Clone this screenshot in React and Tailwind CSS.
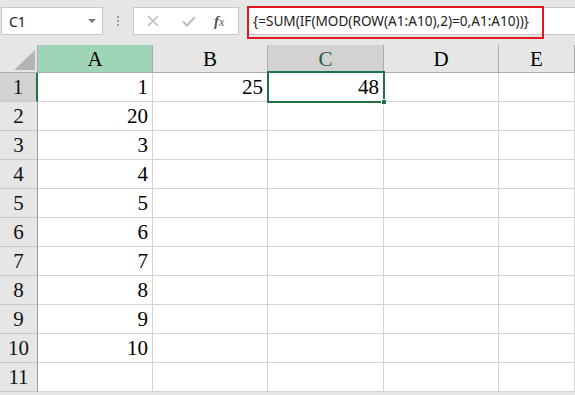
import React from "react";

const cols = [
  { label: "A", w: "w-[115px]" },
  { label: "B", w: "w-[115px]" },
  { label: "C", w: "w-[116px]" },
  { label: "D", w: "w-[115px]" },
  { label: "E", w: "flex-1" },
];

const data = {
  1: { A: "1", B: "25", C: "48" },
  2: { A: "20" },
  3: { A: "3" },
  4: { A: "4" },
  5: { A: "5" },
  6: { A: "6" },
  7: { A: "7" },
  8: { A: "8" },
  9: { A: "9" },
  10: { A: "10" },
};

const serif = "font-['Liberation_Serif','DejaVu_Serif',serif]";

export default function App() {
  const rows = Array.from({ length: 11 }, (_, i) => i + 1);
  return (
    <div className="relative w-[575px] h-[395px] overflow-hidden bg-[#e6e6e6] font-['Noto_Sans','Liberation_Sans',sans-serif]">
      {/* Toolbar */}
      <div className="flex h-[45px] items-start pt-[7px]">
        <div className="ml-[1px] flex h-[28px] w-[102px] items-center justify-between border border-[#c6c6c6] bg-white pl-[7px] pr-[5px]">
          <span className="text-[14px] text-[#222]">C1</span>
          <svg width="10" height="6" viewBox="0 0 10 6">
            <path d="M1 1 L9 1 L5 5 Z" fill="#777" />
          </svg>
        </div>
        <div className="ml-[14px] mt-[9px] flex w-[3px] flex-col gap-[2px]">
          <span className="h-[2px] w-[2px] bg-[#9a9a9a]" />
          <span className="h-[2px] w-[2px] bg-[#9a9a9a]" />
          <span className="h-[2px] w-[2px] bg-[#9a9a9a]" />
        </div>
        <div className="ml-[13px] flex h-[28px] w-[106px] items-center border border-[#c6c6c6] bg-white">
          <svg className="ml-[13px]" width="12" height="12" viewBox="0 0 12 12">
            <path d="M1 1 L11 11 M11 1 L1 11" stroke="#bdbdbd" strokeWidth="1.6" fill="none" />
          </svg>
          <svg className="ml-[23px]" width="14" height="11" viewBox="0 0 14 11">
            <path d="M1 5.5 L5 9.5 L13 1" stroke="#bdbdbd" strokeWidth="2" fill="none" />
          </svg>
          <span className={`ml-[18px] text-[15px] italic text-[#555] ${serif}`}>
            <span className="font-semibold">f</span>
            <span className="text-[12px]">x</span>
          </span>
        </div>
        <div className="ml-[8px] flex h-[28px] flex-1 items-center border border-r-0 border-[#c6c6c6] bg-white pl-[5px]">
          <span className="text-[13.6px] text-[#222]">
            {"{=SUM(IF(MOD(ROW(A1:A10),2)=0,A1:A10))}"}
          </span>
        </div>
      </div>

      {/* Red annotation */}
      <div className="absolute left-[247px] top-[6px] h-[33px] w-[297px] border-2 border-[#e3151f]" />

      {/* Column headers */}
      <div className="flex h-[28px]">
        <div className="relative w-[38px] border-b border-r border-[#ababab] bg-[#e6e6e6]">
          <svg className="absolute left-[14px] top-[5px]" width="21" height="20" viewBox="0 0 21 20">
            <path d="M21 0 L21 20 L0 20 Z" fill="#b4b4b4" />
          </svg>
        </div>
        {cols.map((c) => {
          const bg =
            c.label === "A"
              ? "bg-[#9fd5b7]"
              : c.label === "C"
              ? "bg-[#d2d2d2]"
              : "bg-[#e6e6e6]";
          return (
            <div
              key={c.label}
              className={`${c.w} ${bg} flex items-center justify-center border-b border-r border-[#ababab] ${serif} text-[21px] leading-none text-black pt-[2px]`}
            >
              <span className={c.label === "C" ? "text-[#1f5c3e]" : ""}>{c.label}</span>
            </div>
          );
        })}
      </div>

      {/* Rows */}
      {rows.map((r) => (
        <div key={r} className="flex h-[29px]">
          <div
            className={`flex w-[38px] items-center justify-center border-b border-r ${
              r === 1 ? "border-r-2 border-r-[#217346] bg-[#d2d2d2]" : "border-r-[#9b9b9b] bg-[#e6e6e6]"
            } border-b-[#c8c8c8] ${serif} text-[21px] leading-none text-[#111] pt-[1px]`}
          >
            {r}
          </div>
          {cols.map((c) => {
            const v = data[r] && data[r][c.label];
            return (
              <div
                key={c.label}
                className={`${c.w} flex items-center justify-end border-b border-r border-[#d4d4d4] bg-white pr-[4px] ${serif} text-[21px] leading-none text-black pt-[1px]`}
              >
                {v || ""}
              </div>
            );
          })}
        </div>
      ))}

      {/* Selection C1 */}
      <div className="absolute left-[267px] top-[71px] h-[32px] w-[118px] border-2 border-[#217346]" />
      <div className="absolute left-[381px] top-[99px] h-[6px] w-[6px] border border-white bg-[#217346]" />
    </div>
  );
}
